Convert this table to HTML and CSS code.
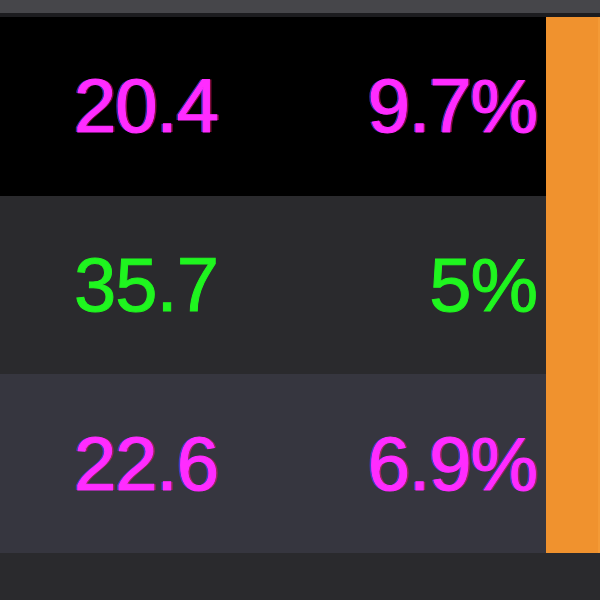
FILE: index.html
```html
<!DOCTYPE html>
<html lang="en">
<head>
    <meta charset="UTF-8">
    <title>Stats</title>
    <link rel="stylesheet" href="styles.css">
</head>
<body>

<div class="top-bar"></div>

<div class="grid-wrap">
    <div class="rows">
        <div class="row row-dark">
            <span class="val up">20.4</span>
            <span class="pct up">9.7%</span>
        </div>
        <div class="row row-mid">
            <span class="val down">35.7</span>
            <span class="pct down">5%</span>
        </div>
        <div class="row row-light">
            <span class="val up">22.6</span>
            <span class="pct up">6.9%</span>
        </div>
    </div>
    <div class="side-bar"></div>
</div>

</body>
</html>
```

FILE: styles.css
```css
body {
    margin: 0;
    background: #2a2a2d;
    font-family: 'Liberation Sans', Arial, sans-serif;
    height: 600px;
    overflow: hidden;
}
.top-bar {
    height: 13px;
    background: #46464a;
    border-bottom: 4px solid #1c1c1f;
}
.grid-wrap {
    display: flex;
    height: 536px;
}
.rows {
    flex: 1;
    display: flex;
    flex-direction: column;
}
.row {
    flex: 1;
    display: flex;
    align-items: center;
    justify-content: space-between;
    padding: 0 9px 0 74px;
    font-size: 76px;
    line-height: 1;
}
.row-dark {
    background: #000;
}
.row-mid {
    background: #2a2a2d;
}
.row-light {
    background: #36363f;
}
.val, .pct {
    letter-spacing: -1px;
}
.up {
    color: #ff2cff;
    -webkit-text-stroke: 1px #ff2cff;
    text-shadow: -2px 0 rgba(70, 60, 255, 0.7), 2px 0 rgba(255, 20, 120, 0.5);
}
.down {
    color: #1ff51f;
    -webkit-text-stroke: 1px #1ff51f;
}
.side-bar {
    width: 54px;
    background: #f0922e;
    border-right: 2px solid #f49a36;
    box-sizing: border-box;
}
```
